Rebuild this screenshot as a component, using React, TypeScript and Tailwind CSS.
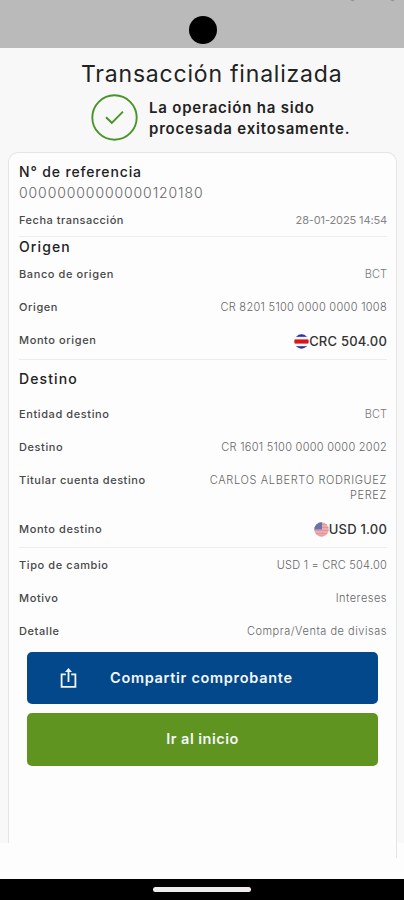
import React from 'react';
import clsx from 'clsx';

interface RowProps {
  label: string;
  labelClass?: string;
  className?: string;
  children: React.ReactNode;
}

const Row: React.FC<RowProps> = ({ label, labelClass = 'tracking-[0.6px]', className, children }) => (
  <div className={clsx('flex justify-between whitespace-nowrap text-[11px] leading-[15px]', className)}>
    <span className={clsx('font-medium text-[#484848]', labelClass)}>{label}</span>
    {children}
  </div>
);

const Divider = ({ className }: { className?: string }) => (
  <div className={clsx('h-px bg-[#ececec]', className)} />
);

const CostaRicaFlag = () => (
  <svg className="size-[15px] shrink-0" viewBox="0 0 15 15">
    <clipPath id="cr"><circle cx="7.5" cy="7.5" r="7.2" /></clipPath>
    <g clipPath="url(#cr)">
      <rect width="15" height="15" fill="#f5f6fb" />
      <rect width="15" height="2.8" fill="#26339c" />
      <rect y="5.4" width="15" height="4.2" fill="#dc1415" />
      <rect y="12.2" width="15" height="2.8" fill="#26339c" />
    </g>
  </svg>
);

const UsaFlag = () => (
  <svg className="size-[15px] shrink-0" viewBox="0 0 15 15">
    <clipPath id="us"><circle cx="7.5" cy="7.5" r="7.2" /></clipPath>
    <g clipPath="url(#us)">
      <rect width="15" height="15" fill="#ecabb1" />
      <path d="M0 2.5h15M0 5.5h15M0 8.5h15M0 11.5h15M0 14h15" stroke="#e2939c" strokeWidth="1.1" />
      <rect width="8" height="7.5" fill="#6873a8" />
    </g>
  </svg>
);

export default function App() {
  return (
    <div className="flex h-[900px] w-[404px] flex-col overflow-hidden bg-[#fdfdfd] font-['Inter','Liberation_Sans',sans-serif] text-[#222]">
      <header className="relative flex h-12 shrink-0 justify-center bg-[#bababa] pt-4">
        <div className="ml-px size-7 rounded-full bg-black" />
        <div className="absolute -top-1 left-[350px] size-[5px] rounded-full bg-[#929292]" />
        <div className="absolute -top-1 left-[390px] size-[5px] rounded-full bg-[#929292]" />
      </header>

      <div className="flex h-[795px] shrink-0 flex-col bg-[#f8f8f8]">
        <h1 className="ml-[81px] mt-2.5 h-8 whitespace-nowrap text-[23px] leading-8 tracking-[0.8px]">Transacción finalizada</h1>
        <div className="ml-[91px] mt-1 flex h-[47px] items-center gap-[11px]">
          <svg className="size-[47px] shrink-0" viewBox="0 0 47 47" fill="none" stroke="#489426">
            <circle cx="23.5" cy="23.5" r="22.2" strokeWidth="1.9" />
            <path d="M15 23.2l5.8 5.6L32 17.7" strokeWidth="1.9" />
          </svg>
          <p className="whitespace-nowrap text-[15px] font-semibold leading-[21px] tracking-[0.8px]">
            <span className="block">La operación ha sido</span>
            <span className="block">procesada exitosamente.</span>
          </p>
        </div>

        {/* the left edge of the card fades out a little before the right one */}
        <main className="ml-2 mt-[11px] flex h-[706px] w-[389px] shrink-0 flex-col rounded-t-[10px] border border-b-0 border-[#e5e5e5] bg-[#fdfdfd] pl-2.5 pr-[9px] pt-2 [clip-path:polygon(0_0,100%_0,100%_100%,2px_100%,2px_691px,0_691px)]">
          <h2 className="h-[22px] whitespace-nowrap text-[14px] font-medium leading-[22px] tracking-[0.85px]">N° de referencia</h2>
          <p className="h-5 whitespace-nowrap text-[14px] font-light leading-5 tracking-[0.9px] text-[#666]">00000000000000120180</p>
          <Row label="Fecha transacción" labelClass="tracking-[0.5px]" className="h-[33px] items-center pt-px">
            <span className="-tracking-[0.12px] text-[#858585]">28-01-2025 14:54</span>
          </Row>
          <Divider />

          <h2 className="h-5 text-[14px] font-medium leading-5 tracking-[1.1px]">Origen</h2>
          <Row label="Banco de origen" className="h-[33px] items-center pt-px">
            <span className="font-light text-[#777]">BCT</span>
          </Row>
          <Row label="Origen" className="h-[34px] items-center">
            <span className="font-light tracking-[0.3px] text-[#666]">CR 8201 5100 0000 0000 1008</span>
          </Row>
          <Row label="Monto origen" className="h-[33px] items-center">
            <span className="flex items-center pt-px text-[13px] font-medium text-[#333]">
              <CostaRicaFlag />
              <span className="tracking-[0.2px]">CRC 504.00</span>
            </span>
          </Row>
          <Divider className="mt-0.5" />

          <h2 className="h-[38px] text-[14px] font-medium leading-[38px] tracking-[1.1px]">Destino</h2>
          <Row label="Entidad destino" className="h-8 items-center">
            <span className="font-light text-[#777]">BCT</span>
          </Row>
          <Row label="Destino" className="h-[34px] items-center">
            <span className="font-light tracking-[0.27px] text-[#666]">CR 1601 5100 0000 0000 2002</span>
          </Row>
          <Row label="Titular cuenta destino" labelClass="tracking-[0.55px]" className="h-12 items-start pt-[9px]">
            <span className="text-right font-light tracking-[0.65px] text-[#666]">
              CARLOS ALBERTO RODRIGUEZ<br />PEREZ
            </span>
          </Row>
          <Row label="Monto destino" className="h-[34px] items-center">
            <span className="flex items-center pt-px text-[13px] font-medium text-[#333]">
              <UsaFlag />
              <span className="tracking-[0.2px]">USD 1.00</span>
            </span>
          </Row>
          <Divider className="mt-px" />
          <Row label="Tipo de cambio" className="h-[34px] items-center">
            <span className="font-light tracking-[0.23px] text-[#666]">USD 1 = CRC 504.00</span>
          </Row>
          <Row label="Motivo" className="h-8 items-center">
            <span className="font-light tracking-[0.5px] text-[#666]">Intereses</span>
          </Row>
          <Row label="Detalle" className="h-[34px] items-center">
            <span className="font-light tracking-[0.52px] text-[#666]">Compra/Venta de divisas</span>
          </Row>

          <div className="ml-2 mr-[9px] mt-[3.5px] flex flex-col gap-[9px] whitespace-nowrap text-[14.5px] font-semibold text-[#f4f7fb]">
            <button className="flex h-[52px] items-center rounded-[5px] bg-[#03488a] pl-[33px]">
              <svg className="h-[22px] w-[18px]" viewBox="0 0 18 22" fill="none" stroke="#f1f5fb" strokeWidth="1.8">
                <path d="M5.8 7.4H1.6v12.4h13.8V7.4h-4.2" />
                <path d="M8.5 15V4" />
                <path d="M5 5l3.5-4L12 5z" fill="#f1f5fb" stroke="none" />
              </svg>
              <span className="ml-8 tracking-[0.7px]">Compartir comprobante</span>
            </button>
            <button className="h-[53px] rounded-[5px] bg-[#5f9421] tracking-[0.5px]">Ir al inicio</button>
          </div>
        </main>
      </div>

      <footer className="mt-auto flex h-[21px] justify-center bg-black pt-2">
        <div className="h-[5px] w-[98px] rounded-full bg-[#f0ecec]" />
      </footer>
    </div>
  );
}
